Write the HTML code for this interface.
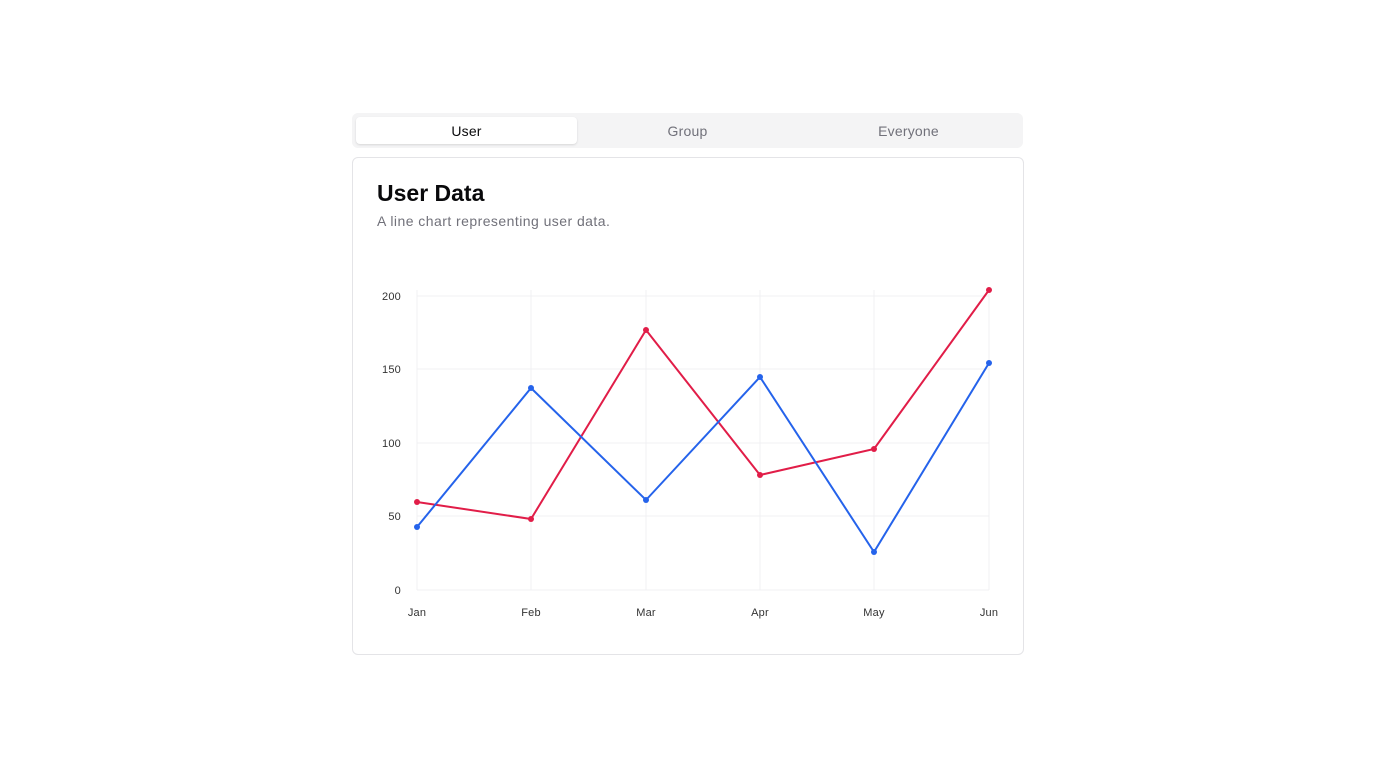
<!DOCTYPE html>
<html><head><meta charset="utf-8"><style>
body{margin:0;width:1376px;height:768px;background:#fff;font-family:"Liberation Sans",sans-serif;position:relative;overflow:hidden}
.tabs{position:absolute;left:352px;top:113px;width:671px;height:35px;background:#f4f4f5;border-radius:6px}
.tab{position:absolute;top:4px;height:27px;width:221px;line-height:29px;text-align:center;font-size:14px;color:#71717a;letter-spacing:0.2px}
.tab.a{background:#fff;color:#09090b;border-radius:4px;box-shadow:0 1px 2px rgba(0,0,0,.12)}
.card{position:absolute;left:352px;top:157px;width:670px;height:496px;border:1px solid #e4e4e7;border-radius:6px}
h1{position:absolute;left:377px;top:180px;margin:0;font-size:23px;font-weight:700;color:#09090b;letter-spacing:0px}
.sub{position:absolute;left:377px;top:213px;font-size:14px;color:#71717a;letter-spacing:0.45px}
svg{position:absolute;left:0;top:0}
</style></head><body>
<div class="tabs"><div class="tab a" style="left:4px">User</div><div class="tab" style="left:225px">Group</div><div class="tab" style="left:446px">Everyone</div></div>
<div class="card"></div>
<h1>User Data</h1>
<div class="sub">A line chart representing user data.</div>
<svg width="1376" height="768" font-family="Liberation Sans, sans-serif" font-size="11" fill="#333" letter-spacing="0.2">
<g stroke="#f1f1f3" stroke-width="1">
<line x1="417" y1="296" x2="989" y2="296"/><line x1="417" y1="369" x2="989" y2="369"/><line x1="417" y1="443" x2="989" y2="443"/><line x1="417" y1="516" x2="989" y2="516"/><line x1="417" y1="590" x2="989" y2="590"/>
<line x1="417" y1="290" x2="417" y2="590"/><line x1="531" y1="290" x2="531" y2="590"/><line x1="646" y1="290" x2="646" y2="590"/><line x1="760" y1="290" x2="760" y2="590"/><line x1="874" y1="290" x2="874" y2="590"/><line x1="989" y1="290" x2="989" y2="590"/>
</g>
<g text-anchor="end"><text x="401" y="300">200</text><text x="401" y="373">150</text><text x="401" y="447">100</text><text x="401" y="520">50</text><text x="401" y="594">0</text></g>
<g text-anchor="middle"><text x="417" y="616">Jan</text><text x="531" y="616">Feb</text><text x="646" y="616">Mar</text><text x="760" y="616">Apr</text><text x="874" y="616">May</text><text x="989" y="616">Jun</text></g>
<polyline fill="none" stroke="#e11d48" stroke-width="2" points="417,502 531,519 646,330 760,475 874,449 989,290"/>
<polyline fill="none" stroke="#2563eb" stroke-width="2" points="417,527 531,388 646,500 760,377 874,552 989,363"/>
<g fill="#e11d48"><circle cx="417" cy="502" r="3"/><circle cx="531" cy="519" r="3"/><circle cx="646" cy="330" r="3"/><circle cx="760" cy="475" r="3"/><circle cx="874" cy="449" r="3"/><circle cx="989" cy="290" r="3"/></g>
<g fill="#2563eb"><circle cx="417" cy="527" r="3"/><circle cx="531" cy="388" r="3"/><circle cx="646" cy="500" r="3"/><circle cx="760" cy="377" r="3"/><circle cx="874" cy="552" r="3"/><circle cx="989" cy="363" r="3"/></g>
</svg>
</body></html>
